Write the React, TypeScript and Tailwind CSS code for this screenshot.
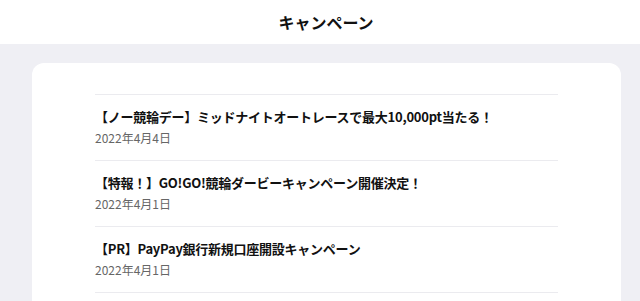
import React from "react";

const items = [
  { title: "【ノー競輪デー】ミッドナイトオートレースで最大10,000pt当たる！", date: "2022年4月4日" },
  { title: "【特報！】GO!GO!競輪ダービーキャンペーン開催決定！", date: "2022年4月1日" },
  { title: "【PR】PayPay銀行新規口座開設キャンペーン", date: "2022年4月1日" },
];

export default function App() {
  return (
    <div
      className="w-[640px] h-[301px] overflow-hidden bg-[#efeff4]"
      style={{ fontFamily: '"Noto Sans CJK JP", "Noto Sans", sans-serif' }}
    >
      <header className="h-[44px] bg-white flex items-center justify-center pl-[12px]">
        <h1 className="text-[16px] leading-[20px] font-semibold text-[#111]">キャンペーン</h1>
      </header>
      <main className="pt-[19px]">
        <div className="ml-[32px] w-[589px] min-h-[400px] rounded-t-xl bg-white pt-[31px] px-[63px]">
          <ul className="border-t border-[#ebebef]">
            {items.map((it, i) => (
              <li key={i} className="border-b border-[#ebebef] pt-3 pb-3">
                <div className="text-[13px] leading-[20px] font-semibold tracking-[-0.25px] text-[#111] whitespace-nowrap">
                  {it.title}
                </div>
                <div className="mt-[1px] text-[12px] leading-[20px] text-[#666]">{it.date}</div>
              </li>
            ))}
          </ul>
        </div>
      </main>
    </div>
  );
}
